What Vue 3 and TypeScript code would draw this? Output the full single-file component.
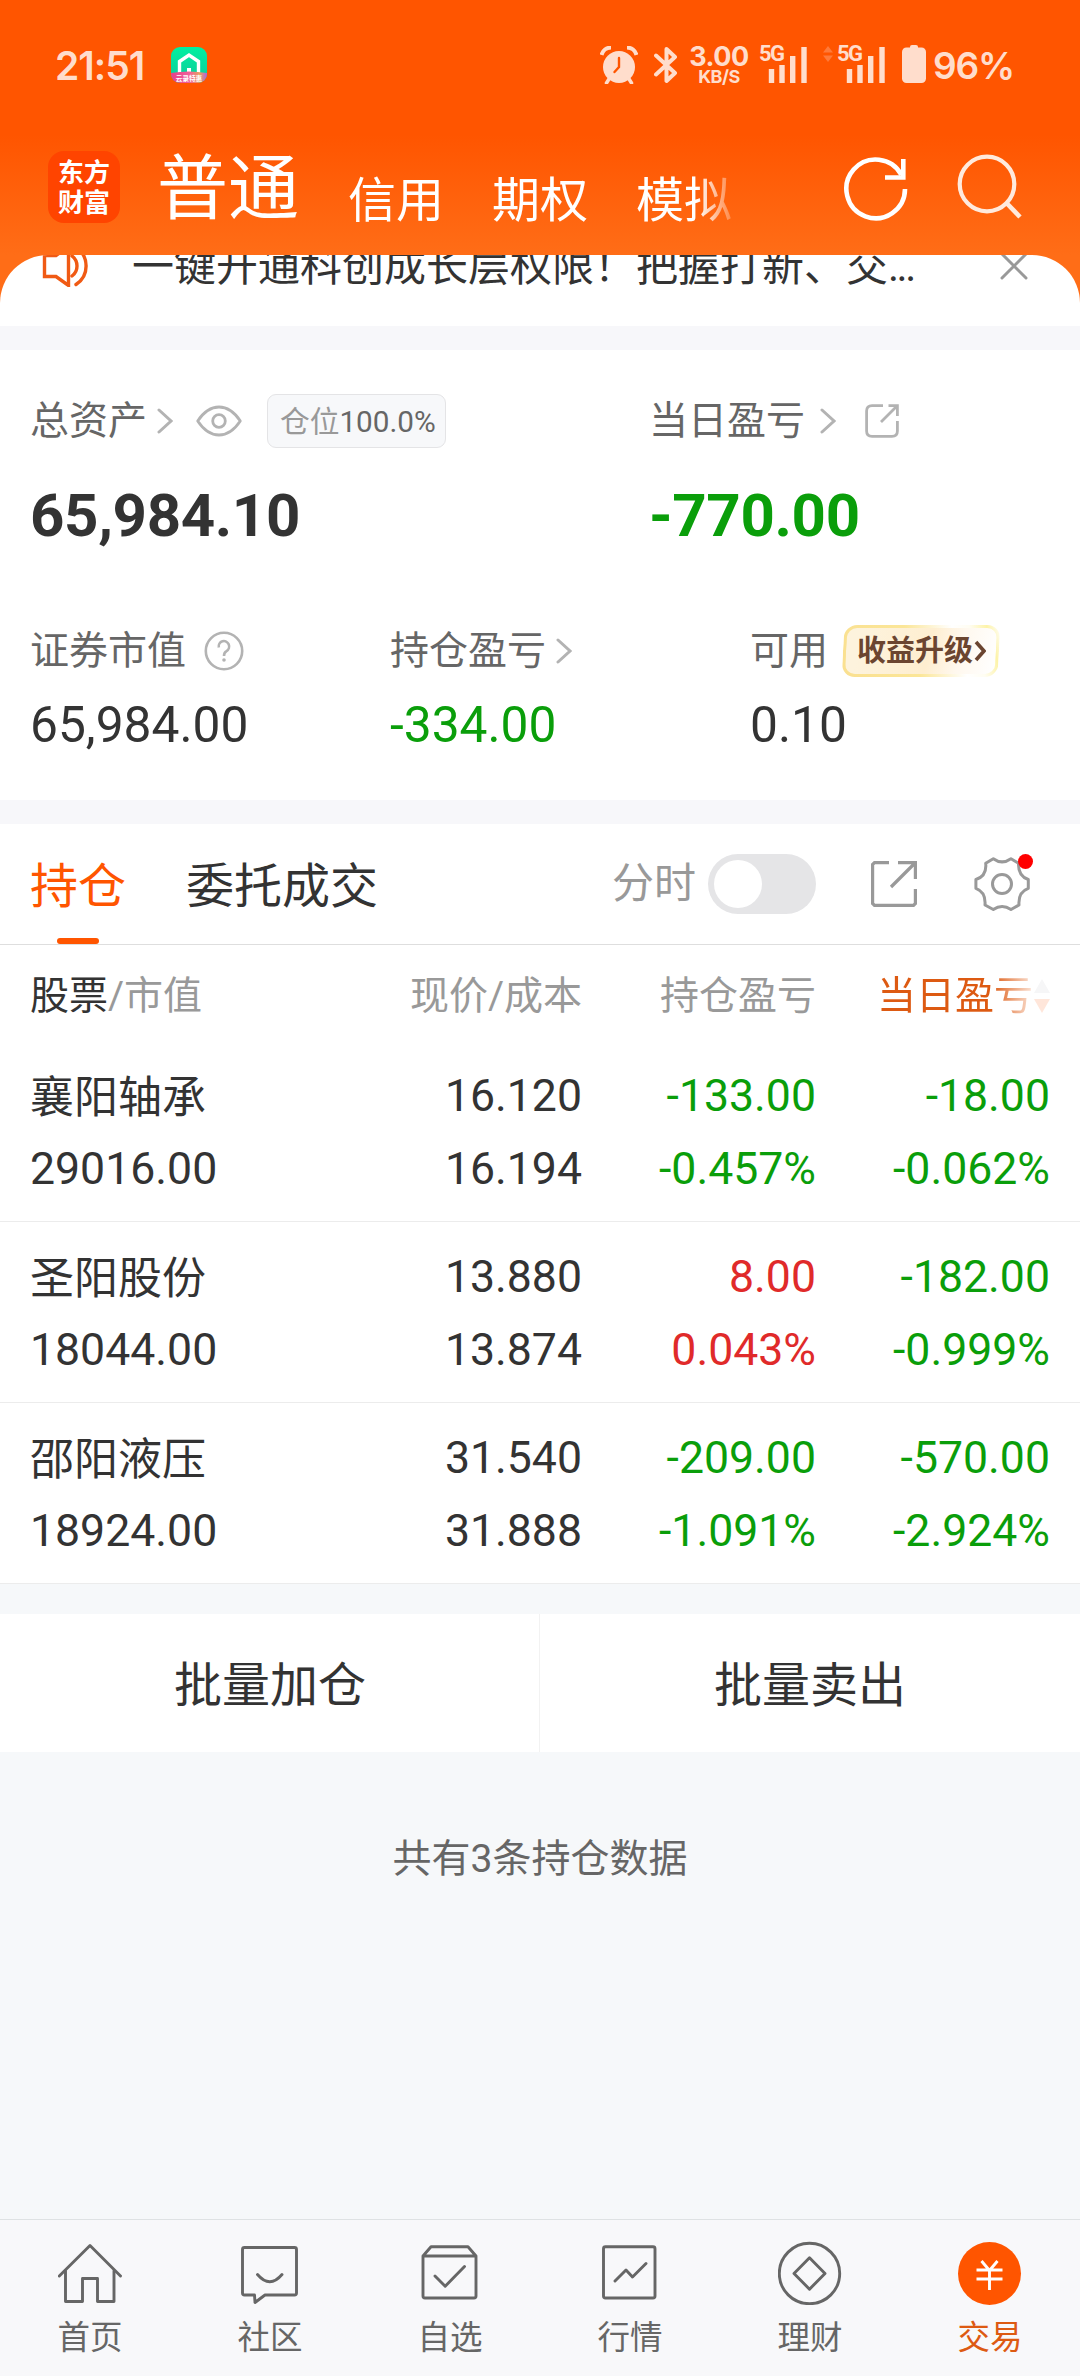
<script setup lang="ts">
interface Holding {
  name: string
  value: string
  price: string
  cost: string
  profit: string
  profitRate: string
  dayProfit: string
  dayRate: string
}

const accountTabs: string[] = ['信用', '期权', '模拟']

const holdings: Holding[] = [
  { name: '襄阳轴承', value: '29016.00', price: '16.120', cost: '16.194', profit: '-133.00', profitRate: '-0.457%', dayProfit: '-18.00', dayRate: '-0.062%' },
  { name: '圣阳股份', value: '18044.00', price: '13.880', cost: '13.874', profit: '8.00', profitRate: '0.043%', dayProfit: '-182.00', dayRate: '-0.999%' },
  { name: '邵阳液压', value: '18924.00', price: '31.540', cost: '31.888', profit: '-209.00', profitRate: '-1.091%', dayProfit: '-570.00', dayRate: '-2.924%' },
]

const navItems = [
  { key: 'home', label: '首页' },
  { key: 'community', label: '社区' },
  { key: 'watch', label: '自选' },
  { key: 'market', label: '行情' },
  { key: 'wealth', label: '理财' },
  { key: 'trade', label: '交易' },
]

const tone = (v: string): string => (v.startsWith('-') ? 'down' : 'up')
</script>

<template>
  <div class="screen">
    <header class="top">
      <div class="status">
        <span class="clock">21:51</span>
        <svg class="app-badge" viewBox="0 0 36 36">
          <defs>
            <linearGradient id="badgeGreen" x1="0" y1="0" x2="0" y2="1">
              <stop offset="0" stop-color="#00f0a0" />
              <stop offset="1" stop-color="#10c99a" />
            </linearGradient>
            <linearGradient id="badgeRibbon" x1="0" y1="0" x2="1" y2="0">
              <stop offset="0" stop-color="#e8408a" />
              <stop offset="0.5" stop-color="#f0609a" />
              <stop offset="0.8" stop-color="#e8a060" />
              <stop offset="1" stop-color="#b060e0" />
            </linearGradient>
            <clipPath id="badgeClip"><rect width="36" height="36" rx="9" /></clipPath>
          </defs>
          <g clip-path="url(#badgeClip)">
            <rect width="36" height="36" fill="url(#badgeGreen)" />
            <path d="M8.500 27V14.500L18 8l9.500 6.500V27" fill="none" stroke="#fff" stroke-width="3.400" />
            <rect x="16" y="21" width="4" height="6" fill="#fff" />
            <path d="M0 26Q18 23 36 26V36H0Z" fill="url(#badgeRibbon)" />
            <text x="18" y="34" text-anchor="middle" font-size="6.600" font-weight="700" fill="#fff">云录特惠</text>
          </g>
        </svg>
        <div class="status-right">
          <svg class="alarm" viewBox="0 0 38 38">
            <path d="M1.500 9A10 10 0 0 1 11 1.500M36.500 9A10 10 0 0 0 27 1.500" fill="none" stroke="#ffddcc" stroke-width="4" />
            <path d="M9 33L6.500 37M29 33l2.500 4" stroke="#ffddcc" stroke-width="3.500" stroke-linecap="round" />
            <circle cx="19" cy="21" r="16" fill="#ffddcc" />
            <path d="M19 12v9l-4.500 5" fill="none" stroke="#ff5500" stroke-width="2.400" stroke-linecap="round" />
          </svg>
          <svg class="bluetooth" viewBox="0 0 24 38">
            <path d="M2 9.500L21 27 12.500 35V3L21 11 2 28.500" fill="none" stroke="#ffddcc" stroke-width="4" stroke-linejoin="round" stroke-linecap="round" />
          </svg>
          <div class="speed"><span class="speed-num">3.00</span><span class="speed-unit">KB/S</span></div>
          <div class="signal first">
            <span>5G</span>
            <svg viewBox="0 0 48 38"><path d="M12.500 23v14M23 19v18M33.700 10v27M45 1v36" stroke="#ffddcc" stroke-width="5.400" /></svg>
          </div>
          <svg class="traffic" viewBox="0 0 10 16"><path d="M5 0L10 6.500H0ZM5 16L10 9.500H0Z" fill="#ff7a3a" /></svg>
          <div class="signal">
            <span>5G</span>
            <svg viewBox="0 0 48 38"><path d="M12.500 23v14M23 19v18M33.700 10v27M45 1v36" stroke="#ffddcc" stroke-width="5.400" /></svg>
          </div>
          <svg class="battery" viewBox="0 0 24 38"><rect x="8" width="8" height="6" rx="2" fill="#ffddcc" /><rect y="2.500" width="24" height="35.500" rx="4.500" fill="#ffddcc" /></svg>
          <span class="percent">96%</span>
        </div>
      </div>
      <div class="title-bar">
        <div class="brand"><span>东方</span><span>财富</span></div>
        <nav class="accounts">
          <span class="current">普通</span>
          <span v-for="t in accountTabs" :key="t" class="account">{{ t }}</span>
        </nav>
        <svg class="refresh" viewBox="0 0 66 66">
          <path d="M62 34A29.300 29.300 0 1 1 58.500 20" fill="none" stroke="#fff" stroke-width="4.600" />
          <path d="M60.300 4V22.500H42" fill="none" stroke="#fff" stroke-width="4.600" />
        </svg>
        <svg class="search" viewBox="0 0 66 66">
          <circle cx="31" cy="31" r="27.300" fill="none" stroke="#ffeadd" stroke-width="4.200" />
          <path d="M50.500 50L64 64" stroke="#ffeadd" stroke-width="4.600" />
        </svg>
      </div>
    </header>

    <section class="notice-wrap">
      <div class="notice">
        <svg class="speaker" viewBox="0 0 48 42" fill="none" stroke="#f05a14" stroke-width="3.400">
          <path d="M2.500 10.500H14L26.500 1.500V40.500L14 31.500H2.500Z" />
          <path d="M30 11A12.500 12.500 0 0 1 30 31M34 2.500A22 22 0 0 1 34 39.500" stroke-linecap="round" />
        </svg>
        <span class="notice-text">一键开通科创成长层权限！把握打新、交<i>...</i></span>
        <svg class="close" viewBox="0 0 28 28"><path d="M2 2L26 26M26 2L2 26" stroke="#999" stroke-width="3" stroke-linecap="round" /></svg>
      </div>
    </section>

    <section class="assets">
      <div class="summary">
        <div class="total">
          <div class="label">
            总资产
            <svg class="chev total-chev" viewBox="0 0 16 26"><path d="M2 2L14 13 2 24" /></svg>
            <svg class="eye" viewBox="0 0 46 32" fill="none" stroke="#b3b3b3" stroke-width="2.800">
              <path d="M1.700 16Q11 2 23 2T44.300 16Q35 30 23 30T1.700 16Z" stroke-linejoin="round" />
              <circle cx="23" cy="16" r="6.300" />
            </svg>
            <span class="position">仓位<b>100.0%</b></span>
          </div>
          <div class="big">65,984.10</div>
        </div>
        <div>
          <div class="label">
            当日盈亏
            <svg class="chev day-chev" viewBox="0 0 16 26"><path d="M2 2L14 13 2 24" /></svg>
            <svg class="share-small" viewBox="0 0 34 34" fill="none" stroke="#b3b3b3" stroke-width="2.800">
              <path d="M18 1.600H7Q1.600 1.600 1.600 7V27Q1.600 32.400 7 32.400H27Q32.400 32.400 32.400 27V17M23.500 1.600H32.400V12M32 2L16 18" />
            </svg>
          </div>
          <div class="big down">-770.00</div>
        </div>
      </div>
      <div class="details">
        <div class="detail">
          <div class="label">
            证券市值
            <svg class="help" viewBox="0 0 40 40">
              <circle cx="20" cy="20" r="18.200" fill="none" stroke="#b3b3b3" stroke-width="2.600" />
              <path d="M14.800 16.500A5.200 5.400 0 1 1 22.500 20.200Q20 21.600 20 25" fill="none" stroke="#b3b3b3" stroke-width="2.600" />
              <circle cx="20" cy="29" r="1.800" fill="#b3b3b3" />
            </svg>
          </div>
          <div class="mid">65,984.00</div>
        </div>
        <div class="detail">
          <div class="label">
            持仓盈亏
            <svg class="chev pos-chev" viewBox="0 0 16 26"><path d="M2 2L14 13 2 24" /></svg>
          </div>
          <div class="mid down">-334.00</div>
        </div>
        <div class="detail">
          <div class="label">
            可用
            <span class="upgrade">
              收益升级
              <svg viewBox="0 0 12 22"><path d="M2 2L10 11 2 20" fill="none" stroke="#6b4530" stroke-width="3.600" /></svg>
            </span>
          </div>
          <div class="mid">0.10</div>
        </div>
      </div>
    </section>

    <section class="positions">
      <div class="tabs">
        <span class="tab active">持仓</span>
        <span class="tab">委托成交</span>
        <span class="minute">分时</span>
        <span class="toggle"><i></i></span>
        <svg class="share" viewBox="0 0 46 46" fill="none" stroke="#999" stroke-width="3.200">
          <path d="M18 1.600H3.500L1.600 3.500V42.500L3.500 44.400H42.500L44.400 42.500V28M27 1.600H44.400V18M44 2L20 26" />
        </svg>
        <span class="settings">
          <svg viewBox="13 15 58 58" fill="none" stroke="#999" stroke-width="3">
            <path d="M25.700 23.300L33.300 18.700Q42 25 51 18.700L58.500 23.300Q58 36 68.300 39.500V48.300Q58 52 59 65L51 69.500Q42 63.500 33.300 69.500L25 65Q26 52 15.900 48.300V39.500Q27 36 25.700 23.300Z" stroke-linejoin="round" />
            <circle cx="42" cy="44" r="9.500" />
          </svg>
          <i></i>
        </span>
      </div>

      <div class="row head">
        <span><em>股票</em>/市值</span>
        <span>现价/成本</span>
        <span>持仓盈亏</span>
        <span class="sort">
          当日盈亏
          <svg viewBox="0 0 16 34"><path d="M8 0L16 14H0Z" fill="#f6f6f7" /><path d="M8 34L16 20H0Z" fill="#ffe6da" /></svg>
        </span>
      </div>

      <div v-for="h in holdings" :key="h.name" class="row stock">
        <div><p class="name">{{ h.name }}</p><p>{{ h.value }}</p></div>
        <div><p>{{ h.price }}</p><p>{{ h.cost }}</p></div>
        <div :class="tone(h.profit)"><p>{{ h.profit }}</p><p>{{ h.profitRate }}</p></div>
        <div :class="tone(h.dayProfit)"><p>{{ h.dayProfit }}</p><p>{{ h.dayRate }}</p></div>
      </div>
    </section>

    <section class="batch">
      <button type="button">批量加仓</button>
      <button type="button">批量卖出</button>
    </section>

    <p class="count">共有3条持仓数据</p>

    <footer class="nav">
      <div v-for="item in navItems" :key="item.key" class="nav-item" :class="{ on: item.key === 'trade' }">
        <svg viewBox="0 0 64 64" fill="none" stroke="#666" stroke-width="2.900" stroke-linejoin="round" stroke-linecap="round">
          <template v-if="item.key === 'home'">
            <path d="M1.300 35L32 4.500 62.500 35" />
            <path d="M7.500 30V60.500H24.500V37.500H39.500V60.500H56V30" />
          </template>
          <path v-else-if="item.key === 'community'" d="M6.500 6.500H56.500Q58.500 6.500 58.500 8.500V52Q58.500 54 56.500 54H27L17 61.500 16.500 54H6.500Q4.500 54 4.500 52V8.500Q4.500 6.500 6.500 6.500ZM19.500 33.500Q31.800 48 44 33.500" />
          <path v-else-if="item.key === 'watch'" d="M5 15L13 5.800H50L58 15V55Q58 57 56 57H7Q5 57 5 55ZM5 15H58M17 35L27.200 45.300 46.500 25.500" />
          <path v-else-if="item.key === 'market'" d="M7.500 5.800H55Q57 5.800 57 7.800V55Q57 57 55 57H7.500Q5.500 57 5.500 55V7.800Q5.500 5.800 7.500 5.800ZM17 40L28 29 34.500 36 48 22.500" />
          <template v-else-if="item.key === 'wealth'">
            <circle cx="31.500" cy="32.500" r="30.200" />
            <path d="M31.500 16.800L47 32.500 31.500 48.200 16 32.500Z" />
          </template>
          <template v-else>
            <circle cx="31.500" cy="32.500" r="31.500" fill="#ff5500" stroke="none" />
            <path d="M23.500 20L31.500 29.500 39.500 20M18.500 29H44.500M18.500 38H44.500M31.500 29V49" stroke="#fff" stroke-linecap="butt" />
          </template>
        </svg>
        <span>{{ item.label }}</span>
      </div>
    </footer>
  </div>
</template>

<style>
body {
  margin: 0;
  background: #f6f8fa;
}
</style>

<style scoped>
.screen {
  width: 1080px;
  height: 2376px;
  display: flex;
  flex-direction: column;
  overflow: hidden;
  background: #f6f8fa;
  color: #333;
  font-family: Roboto, "Noto Sans CJK SC", sans-serif;
}
svg {
  display: block;
  flex: none;
}
p {
  margin: 0;
}

/* header */
.top {
  height: 303px;
  flex: none;
  background: linear-gradient(#ff5500 135px, #ff6d17 255px);
}
.status {
  height: 130px;
  display: flex;
  align-items: center;
  padding: 0 68px 0 55px;
  color: #ffddcc;
  font-family: Inter, "Noto Sans CJK SC", sans-serif;
}
.clock {
  width: 116px;
  font-size: 39px;
  font-weight: 600;
  letter-spacing: -1px;
}
.app-badge {
  width: 36px;
  height: 36px;
}
.status-right {
  margin-left: auto;
  display: flex;
  align-items: center;
}
.alarm {
  width: 38px;
  height: 38px;
}
.bluetooth {
  width: 24px;
  height: 38px;
  margin-left: 16px;
}
.speed {
  width: 60px;
  margin-left: 11px;
  display: flex;
  flex-direction: column;
  align-items: center;
  font-weight: 700;
}
.speed-num {
  font-size: 27px;
  line-height: 22px;
  letter-spacing: -0.500px;
}
.speed-unit {
  font-size: 18px;
  line-height: 17px;
  letter-spacing: -0.500px;
}
.signal {
  width: 48px;
  height: 38px;
  display: grid;
}
.signal.first {
  margin-left: 10px;
}
.signal span,
.signal svg {
  grid-area: 1 / 1;
}
.signal span {
  font: 700 22px/16px Roboto, sans-serif;
  letter-spacing: -1.500px;
}
.traffic {
  width: 10px;
  height: 16px;
  margin: -22px 4px 0 16px;
}
.battery {
  width: 24px;
  height: 38px;
  margin: -2px 7px 0 17px;
}
.percent {
  width: 79px;
  font-size: 37px;
  font-weight: 600;
  letter-spacing: -1.200px;
}
.title-bar {
  display: flex;
  height: 125px;
  padding: 0 48px;
}
.brand {
  width: 72px;
  height: 72px;
  box-sizing: border-box;
  padding-top: 2px;
  margin-top: 21px;
  border-radius: 16px;
  background: #ff4400;
  color: #fff;
  display: flex;
  flex-direction: column;
  align-items: center;
  justify-content: center;
  font-size: 26px;
  line-height: 30px;
  font-weight: 700;
}
.accounts {
  width: 620px;
  margin-left: 37px;
  display: flex;
  align-items: flex-start;
  color: #fff;
  white-space: nowrap;
  mask-image: linear-gradient(90deg, #000 540px, transparent 585px);
}
.current {
  margin-right: 1px;
  font-size: 71px;
  line-height: 117px;
}
.account {
  margin-left: 48px;
  font-size: 48px;
  line-height: 141px;
}
.refresh {
  width: 66px;
  height: 66px;
  margin: 25px 0 0 66px;
}
.search {
  width: 66px;
  height: 66px;
  margin: 23px 0 0 47px;
}

/* notice strip, its upper part tucked under the header */
.notice-wrap {
  height: 71px;
  margin-top: -48px;
  flex: none;
  overflow: hidden;
  background: #fff;
  border-radius: 48px 48px 0 0;
}
.notice {
  height: 42px;
  margin-top: -10px;
  padding: 0 52px 0 42px;
  display: flex;
  align-items: center;
}
.speaker {
  width: 48px;
  height: 42px;
}
.notice-text {
  margin-left: 42px;
  padding-top: 2px;
  font-size: 42px;
  line-height: 42px;
  white-space: nowrap;
}
.notice-text i {
  font-style: normal;
  letter-spacing: -2.500px;
}
.close {
  width: 28px;
  height: 28px;
  margin-left: auto;
}

/* assets */
.assets {
  height: 450px;
  margin-top: 24px;
  flex: none;
  background: #fff;
  box-shadow: 0 -24px 0 #f7f7fa, 0 24px 0 #f7f7fa;
}
.summary {
  display: flex;
  padding: 41px 30px 0;
}
.total {
  width: 619px;
}
.label {
  height: 60px;
  display: flex;
  align-items: center;
  font-size: 39px;
  line-height: 60px;
  color: #666;
  white-space: nowrap;
}
.chev {
  width: 16px;
  height: 26px;
  fill: none;
  stroke: #b3b3b3;
  stroke-width: 3;
  stroke-linecap: round;
}
.total-chev {
  margin-left: 10px;
}
.eye {
  width: 46px;
  height: 32px;
  margin-left: 23px;
}
.position {
  height: 54px;
  box-sizing: border-box;
  margin-left: 25px;
  padding: 0 9px 0 12px;
  border: 1px solid #e4e4e6;
  border-radius: 9px;
  background: #f7f8fa;
  color: #999;
  font-size: 29.700px;
  line-height: 53px;
}
.position b {
  font-weight: 400;
  color: #666;
}
.day-chev {
  margin-left: 15px;
}
.share-small {
  width: 34px;
  height: 34px;
  margin-left: 29px;
}
.big {
  height: 60px;
  margin-top: 35px;
  font-size: 60px;
  line-height: 60px;
  font-weight: 700;
  letter-spacing: -0.350px;
}
.details {
  display: flex;
  padding: 75px 30px 0;
}
.detail {
  width: 360px;
  flex: none;
}
.help {
  width: 40px;
  height: 40px;
  margin-left: 18px;
}
.pos-chev {
  margin-left: 10px;
}
.upgrade {
  position: relative;
  z-index: 0;
  height: 52px;
  width: 158px;
  box-sizing: border-box;
  margin-left: 14px;
  padding-left: 15px;
  display: flex;
  align-items: center;
  color: #6b4530;
  font-size: 29px;
  line-height: 52px;
  font-weight: 700;
}
.upgrade::before {
  content: "";
  position: absolute;
  inset: 0 1px;
  z-index: -1;
  border: 3px solid transparent;
  border-radius: 13px;
  transform: skewX(-3deg);
  background:
    linear-gradient(100deg, #fdf3dd 10%, #feeed0 55%, #fff8ee 75%, #fff) padding-box,
    linear-gradient(70deg, #fae090 0%, #fbe698 45%, #fff 72%, #fffdf2 82%, #fdf3a8 92%, #fff 100%) border-box;
}
.upgrade svg {
  width: 12px;
  height: 22px;
  margin-left: 1px;
}
.mid {
  height: 50px;
  margin-top: 19px;
  font-size: 49.700px;
  line-height: 50px;
}
.down {
  color: #0a9e0a;
}
.up {
  color: #e02a2a;
}

/* positions */
.positions {
  margin-top: 24px;
  flex: none;
  background: #fff;
}
.tabs {
  height: 120px;
  display: flex;
  align-items: center;
  padding: 0 30px;
  border-bottom: 1px solid #dedede;
}
.tab {
  position: relative;
  height: 120px;
  margin-right: 60px;
  font-size: 48px;
  line-height: 125px;
}
.tab.active {
  color: #ff5500;
}
.tab.active::after {
  content: "";
  position: absolute;
  left: 27px;
  bottom: 0;
  width: 42px;
  height: 6px;
  border-radius: 3px;
  background: #ff5500;
}
.minute {
  margin-left: 174px;
  font-size: 42px;
  line-height: 64px;
  color: #999;
}
.toggle {
  width: 108px;
  height: 60px;
  margin-left: 12px;
  box-sizing: border-box;
  padding: 6px;
  border-radius: 30px;
  background: #e5e5e7;
}
.toggle i {
  display: block;
  width: 48px;
  height: 48px;
  border-radius: 50%;
  background: #fff;
}
.share {
  width: 46px;
  height: 46px;
  margin-left: 55px;
}
.settings {
  position: relative;
  margin-left: 56px;
}
.settings svg {
  width: 58px;
  height: 58px;
}
.settings i {
  position: absolute;
  right: -2px;
  top: -1px;
  width: 15px;
  height: 15px;
  border-radius: 50%;
  background: #ff0000;
}
.row {
  display: grid;
  grid-template-columns: 318px 234px 234px 234px;
  padding: 0 30px;
  text-align: right;
}
.row > :first-child {
  text-align: left;
}
.head {
  height: 96px;
  font-size: 39px;
  line-height: 102px;
  color: #999;
}
.head em {
  font-style: normal;
  color: #333;
}
.sort {
  display: flex;
  justify-content: flex-end;
  align-items: center;
  white-space: nowrap;
  color: #d95a14;
  -webkit-text-fill-color: transparent;
  background: linear-gradient(90deg, #dd5a12 175px, #fdeee6 220px) text;
}
.sort svg {
  width: 16px;
  height: 34px;
  margin-left: 1px;
}
.stock {
  height: 180px;
  border-bottom: 1px solid #ececec;
  font-size: 44.600px;
}
.stock p {
  height: 73px;
  line-height: 73px;
}
.stock p:first-child {
  margin-top: 19px;
}
.stock .name {
  font-size: 44px;
  line-height: 76px;
}

.batch {
  height: 138px;
  margin-top: 30px;
  flex: none;
  display: flex;
  background: #fff;
}
.batch button {
  width: 540px;
  padding: 6px 0 0;
  border: 0;
  background: none;
  color: #333;
  font: 48px/1 Roboto, "Noto Sans CJK SC", sans-serif;
}
.batch button:first-child {
  box-shadow: inset -1px 0 #f2f2f2;
}
.count {
  margin-top: 77px;
  font-size: 39px;
  line-height: 60px;
  text-align: center;
  color: #666;
}

/* bottom navigation */
.nav {
  height: 156px;
  margin-top: auto;
  flex: none;
  display: flex;
  border-top: 1px solid #dfe2e4;
  background: #f8f8fa;
}
.nav-item {
  width: 180px;
  display: flex;
  flex-direction: column;
  align-items: center;
  font-size: 32.500px;
  line-height: 40px;
  color: #666;
}
.nav-item svg {
  width: 64px;
  height: 64px;
  margin: 21px 0 13px;
}
.nav-item.on {
  color: #dd5a12;
}
</style>
